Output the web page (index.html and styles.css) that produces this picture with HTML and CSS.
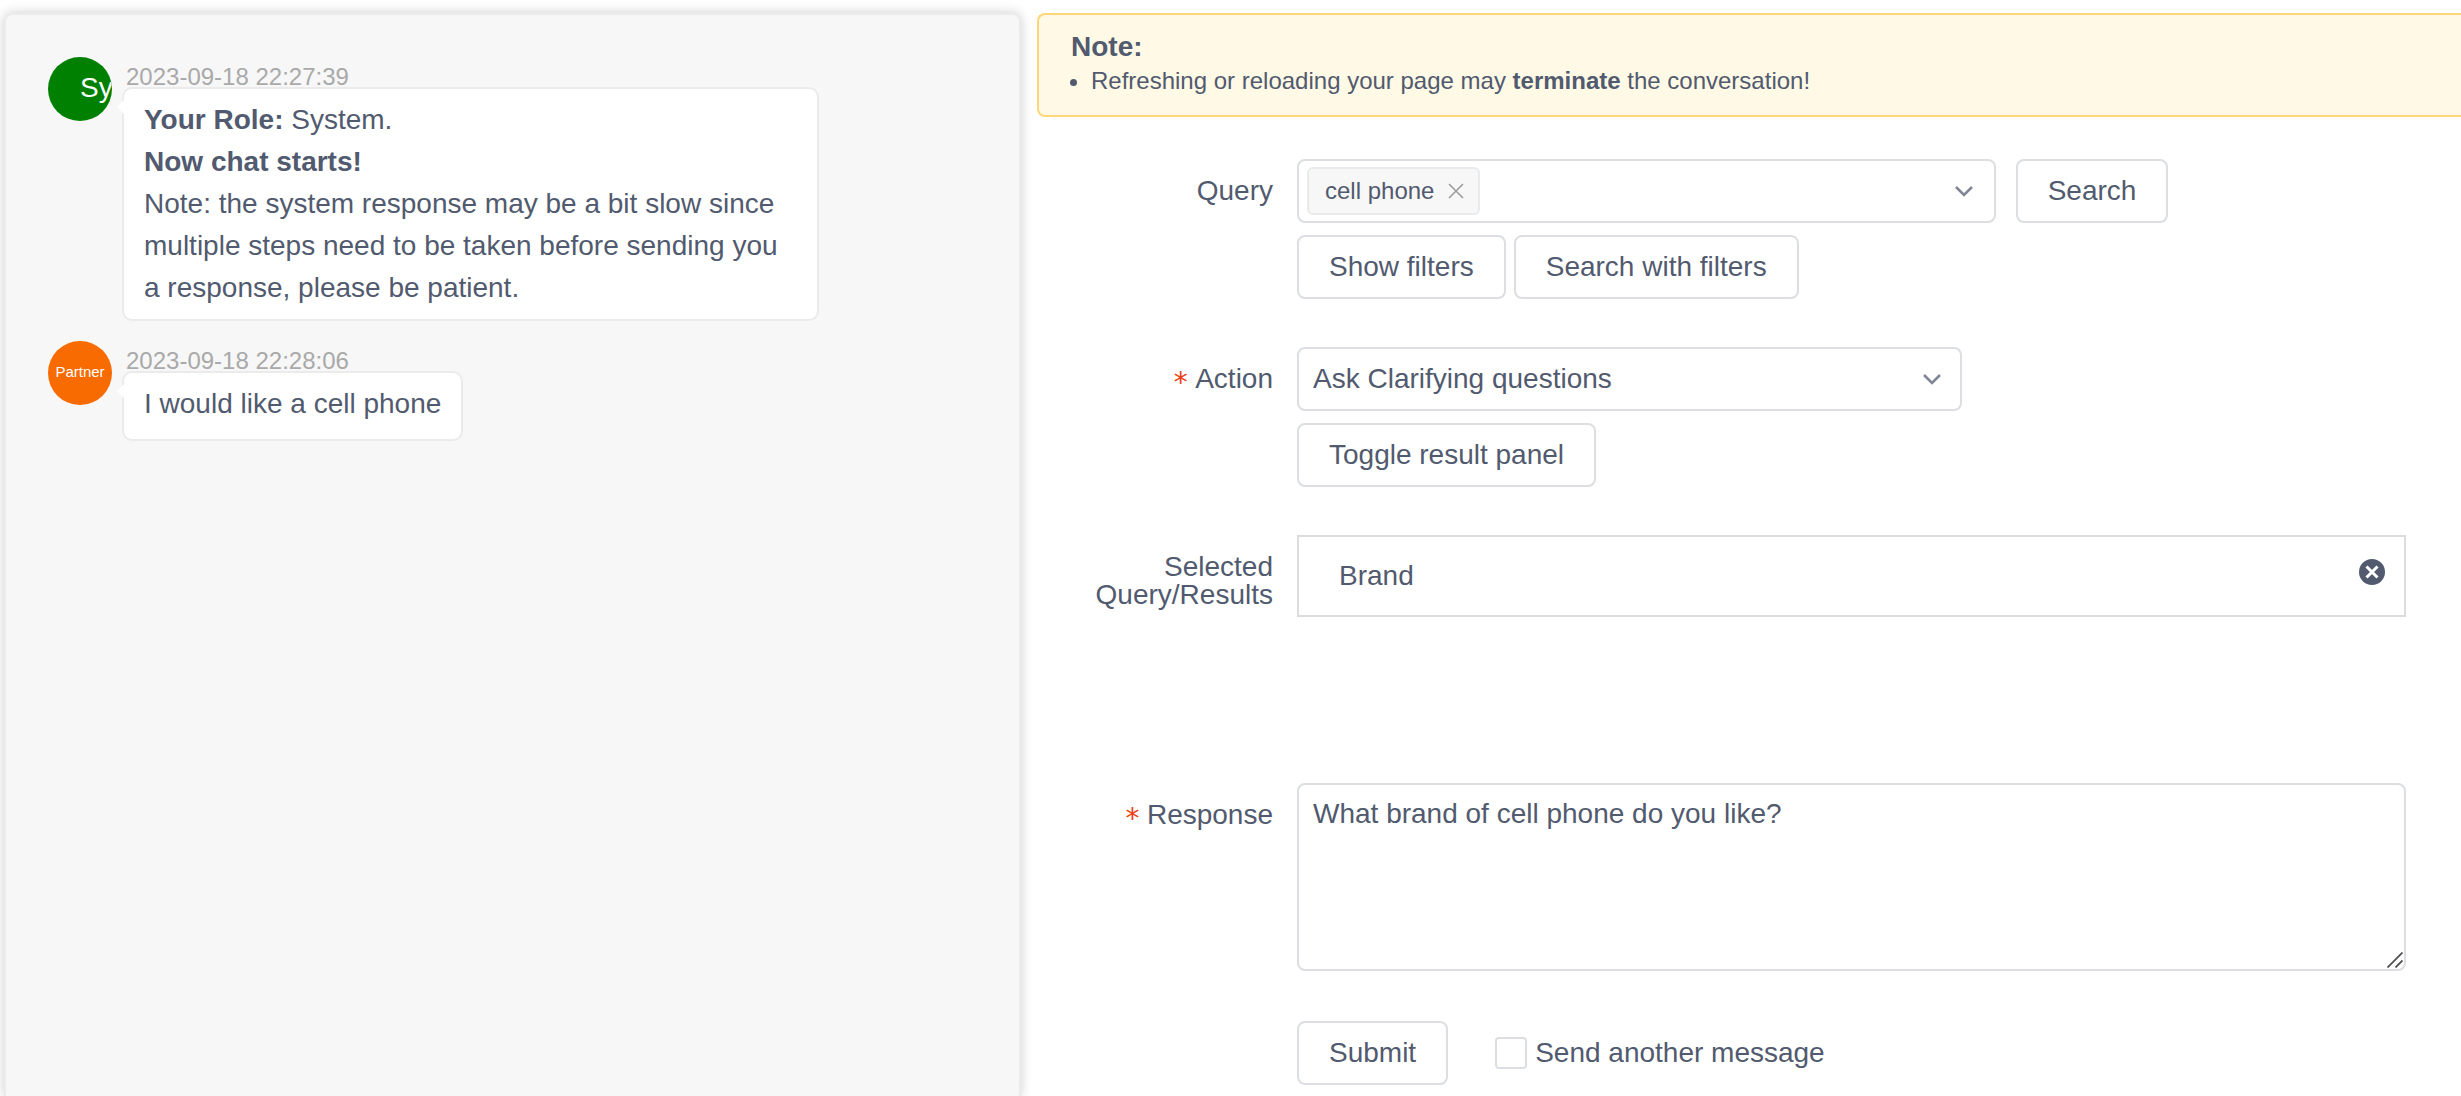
FILE: index.html
```html
<!DOCTYPE html>
<html lang="en">
<head>
<meta charset="utf-8">
<meta name="viewport" content="width=device-width, initial-scale=1">
<title>Conversation</title>
<link rel="stylesheet" href="styles.css">
</head>
<body>
<div class="layout">
  <section class="chat" aria-label="Chat history">
    <article class="message">
      <div class="avatar avatar-system"><span class="avatar-shift">System</span></div>
      <div class="message-body">
        <time class="message-time">2023-09-18 22:27:39</time>
        <div class="bubble"><strong>Your Role:</strong> System.<br><strong>Now chat starts!</strong><br>Note: the system response may be a bit slow since multiple steps need to be taken before sending you a response, please be patient.</div>
      </div>
    </article>
    <article class="message">
      <div class="avatar avatar-partner">Partner</div>
      <div class="message-body">
        <time class="message-time">2023-09-18 22:28:06</time>
        <div class="bubble">I would like a cell phone</div>
      </div>
    </article>
  </section>

  <main class="workspace">
    <div class="alert" role="note">
      <strong class="alert-title">Note:</strong>
      <ul class="alert-list">
        <li>Refreshing or reloading your page may <strong>terminate</strong> the conversation!</li>
      </ul>
    </div>

    <form class="form">
      <div class="form-row">
        <label class="form-label" for="query">Query</label>
        <div class="form-content">
          <div class="line line-wide">
            <div class="query-box">
              <span class="tag">cell phone
                <button class="tag-close" type="button" aria-label="Remove cell phone">
                  <svg width="16" height="16" viewBox="0 0 16 16"><path d="M1 1l14 14M15 1L1 15" fill="none" stroke="#999" stroke-width="1.5"/></svg>
                </button>
              </span>
              <input class="query-input" id="query" type="text">
              <svg class="chevron" width="18" height="12" viewBox="0 0 18 12"><path d="M1 2l8 8 8-8" fill="none" stroke="#808695" stroke-width="2.6"/></svg>
            </div>
            <button class="button" type="button">Search</button>
          </div>
          <div class="line">
            <button class="button" type="button">Show filters</button>
            <button class="button" type="button">Search with filters</button>
          </div>
        </div>
      </div>

      <div class="form-row">
        <label class="form-label required" for="action">Action</label>
        <div class="form-content">
          <div class="select-box">
            <select class="select" id="action"><option>Ask Clarifying questions</option></select>
            <svg class="chevron" width="18" height="12" viewBox="0 0 18 12"><path d="M1 2l8 8 8-8" fill="none" stroke="#808695" stroke-width="2.6"/></svg>
          </div>
          <div class="line">
            <button class="button" type="button">Toggle result panel</button>
          </div>
        </div>
      </div>

      <div class="form-row">
        <div class="form-label">Selected Query/Results</div>
        <div class="form-content selected-area">
          <div class="selected-item">
            <span>Brand</span>
            <button class="remove" type="button" aria-label="Remove Brand">
              <svg width="26" height="26" viewBox="0 0 26 26"><circle cx="13" cy="13" r="13" fill="#515a6e"/><path d="M7.5 7.5l11 11M18.500 7.500l-11 11" fill="none" stroke="#fff" stroke-width="3"/></svg>
            </button>
          </div>
        </div>
      </div>

      <div class="form-row">
        <label class="form-label required" for="response">Response</label>
        <div class="form-content response-box">
          <textarea class="response" id="response">What brand of cell phone do you like?</textarea>
          <svg class="grip" width="16" height="16" viewBox="0 0 16 16"><path d="M0.500 15.500l15-15M8.500 15.500l7-7" fill="none" stroke="#515151" stroke-width="1.8"/></svg>
        </div>
      </div>

      <div class="form-row">
        <div class="form-content form-actions">
          <button class="button" type="submit">Submit</button>
          <label class="check"><input class="check-input" type="checkbox">Send another message</label>
        </div>
      </div>
    </form>
  </main>
</div>
</body>
</html>
```
FILE: styles.css
```css
* {
  box-sizing: border-box;
}

body {
  margin: 0;
  background: #fff;
  color: #515a6e;
  font: 28px/42px "Liberation Sans", Arial, sans-serif;
}

button,
input,
select,
textarea {
  color: inherit;
  font: inherit;
}

svg {
  display: block;
}

.layout {
  display: grid;
  grid-template-columns: 1017fr 1424fr;
  column-gap: 16px;
  min-height: 100vh;
  padding: 13px 0 0 4px;
  overflow: hidden;
}

/* Chat history */
.chat {
  display: flex;
  flex-direction: column;
  gap: 20px;
  padding: 42px;
  border: 2px solid #ebebeb;
  border-bottom: 0;
  border-radius: 8px 8px 0 0;
  background: #f7f7f7;
  box-shadow: 0 0 12px rgba(0, 0, 0, 0.2);
}

.message {
  display: flex;
  gap: 10px;
}

.avatar {
  flex: none;
  width: 64px;
  height: 64px;
  border-radius: 50%;
  overflow: hidden;
  color: #fff;
  line-height: 62px;
  white-space: nowrap;
}

.avatar-system {
  background: #008000;
}

.avatar-shift {
  margin-left: 32px;
}

.avatar-partner {
  background: #f76b00;
  font-size: 15px;
  text-align: center;
}

.message-body {
  display: flex;
  flex-direction: column;
  align-items: flex-start;
  max-width: 75%;
  padding-top: 4px;
}

.message-time {
  height: 26px;
  padding-left: 4px;
  color: #a9a9a9;
  font-size: 24px;
  line-height: 32px;
}

.bubble {
  position: relative;
  min-height: 70px;
  padding: 10px 20px;
  border: 2px solid #ebebeb;
  border-radius: 10px;
  background: #fff;
}

.bubble::before {
  content: "";
  position: absolute;
  top: 10px;
  left: -7px;
  border: 8px solid transparent;
  border-left: 0;
  border-right-color: #fff;
}

/* Notice */
.alert {
  padding: 18px 32px 16px;
  border: 2px solid #ffd77a;
  border-right: 0;
  border-radius: 8px 0 0 8px;
  background: #fff9e6;
}

.alert-title {
  display: block;
  line-height: 28px;
}

.alert-list {
  margin: 2px 0 0;
  padding-left: 20px;
  font-size: 24px;
  line-height: 36px;
}

/* Form */
.form {
  display: flex;
  flex-direction: column;
  gap: 48px;
  padding: 42px 55px 0 0;
}

.form-row {
  display: grid;
  grid-template-columns: 260px 1fr;
}

.form-label {
  padding: 18px 24px 0 0;
  line-height: 28px;
  text-align: right;
}

.required::before {
  content: "*";
  margin-right: 6px;
  color: #ed4014;
  font-family: "DejaVu Sans Mono", monospace;
  line-height: 1;
  vertical-align: -4px;
}

.form-content {
  grid-column: 2;
  display: flex;
  flex-direction: column;
  gap: 12px;
}

.line {
  display: flex;
  gap: 8px;
}

.line-wide {
  gap: 20px;
}

.button {
  height: 64px;
  padding: 0 30px;
  border: 2px solid #dcdee2;
  border-radius: 8px;
  background: #fff;
  line-height: 60px;
  white-space: nowrap;
}

.query-box {
  display: flex;
  align-items: center;
  width: 63%;
  height: 64px;
  padding: 0 21px 0 8px;
  border: 2px solid #dcdee2;
  border-radius: 8px;
}

.tag {
  display: flex;
  flex: none;
  align-items: center;
  gap: 14px;
  height: 48px;
  padding: 0 14px 0 16px;
  border: 2px solid #e8eaec;
  border-radius: 6px;
  background: #f7f7f7;
  font-size: 24px;
}

.tag-close,
.remove {
  padding: 0;
  border: 0;
  background: none;
}

.query-input {
  flex: 1;
  min-width: 0;
  border: 0;
  outline: 0;
  background: none;
}

.select-box {
  display: grid;
  align-items: center;
  width: 60%;
}

.select-box > * {
  grid-area: 1 / 1;
}

.select-box .chevron {
  justify-self: end;
  margin-right: 21px;
  pointer-events: none;
}

.select {
  width: 100%;
  height: 64px;
  padding: 0 48px 0 14px;
  border: 2px solid #dcdee2;
  border-radius: 8px;
  background: #fff;
  appearance: none;
}

.selected-area {
  min-height: 200px;
}

.selected-item {
  display: flex;
  align-items: flex-start;
  justify-content: space-between;
  padding: 18px 19px 18px 40px;
  border: 2px solid #dcdcdc;
}

.remove {
  margin-top: 4px;
}

.response-box {
  position: relative;
}

.response {
  display: block;
  width: 100%;
  height: 188px;
  padding: 8px 14px;
  border: 2px solid #dcdee2;
  border-radius: 8px;
  background: #fff;
  resize: none;
}

.grip {
  position: absolute;
  right: 3px;
  bottom: 3px;
}

.form-actions {
  flex-direction: row;
  align-items: center;
  gap: 47px;
  padding-top: 2px;
}

.check {
  display: flex;
  align-items: center;
  gap: 8px;
}

.check-input {
  width: 32px;
  height: 32px;
  margin: 0;
  border: 2px solid #dcdee2;
  border-radius: 4px;
  background: #fff;
  appearance: none;
}
```
